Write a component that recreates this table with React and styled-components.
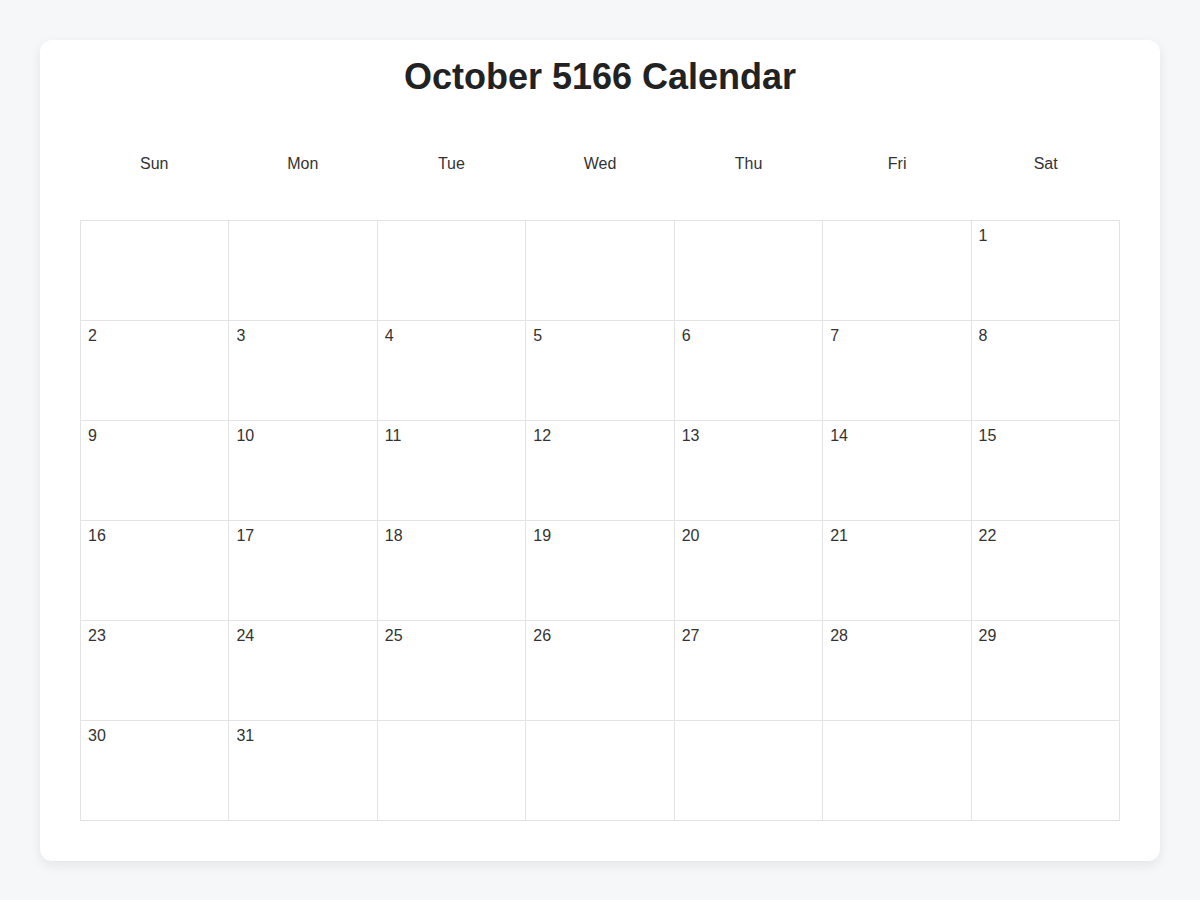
import React from "react";
import styled, { createGlobalStyle } from "styled-components";

const Global = createGlobalStyle`
  html, body { margin: 0; padding: 0; }
  body {
    background: #f6f7f9;
    font-family: "Liberation Sans", Arial, sans-serif;
    color: #333;
  }
`;

const Page = styled.div`
  padding: 40px;
`;

const Card = styled.div`
  background: #fff;
  border-radius: 12px;
  box-shadow: 0 4px 12px rgba(0, 0, 0, 0.08);
  padding: 16px 40px 40px;
`;

const Title = styled.h1`
  margin: 0 0 30px;
  font-size: 36px;
  line-height: 42px;
  font-weight: 700;
  text-align: center;
  color: #222;
`;

const HeaderRow = styled.div`
  display: grid;
  grid-template-columns: repeat(7, 1fr);
  height: 72px;
  margin-bottom: 20px;
`;

const DayName = styled.div`
  display: flex;
  align-items: center;
  justify-content: center;
  font-size: 16px;
  color: #333;
`;

const Grid = styled.div`
  display: grid;
  grid-template-columns: repeat(7, 1fr);
  grid-auto-rows: 100px;
  border-top: 1px solid #e3e3e3;
  border-left: 1px solid #e3e3e3;
`;

const Cell = styled.div`
  border-right: 1px solid #e3e3e3;
  border-bottom: 1px solid #e3e3e3;
  padding: 6px 7px;
  font-size: 16px;
  line-height: 18px;
  color: #333;
`;

const days = ["Sun", "Mon", "Tue", "Wed", "Thu", "Fri", "Sat"];

export default function App() {
  const cells = [];
  const offset = 6;
  for (let i = 0; i < 42; i++) {
    const d = i - offset + 1;
    cells.push(d >= 1 && d <= 31 ? d : null);
  }
  return (
    <>
      <Global />
      <Page>
        <Card>
          <Title>October 5166 Calendar</Title>
          <HeaderRow>
            {days.map((d) => (
              <DayName key={d}>{d}</DayName>
            ))}
          </HeaderRow>
          <Grid>
            {cells.map((d, i) => (
              <Cell key={i}>{d}</Cell>
            ))}
          </Grid>
        </Card>
      </Page>
    </>
  );
}
